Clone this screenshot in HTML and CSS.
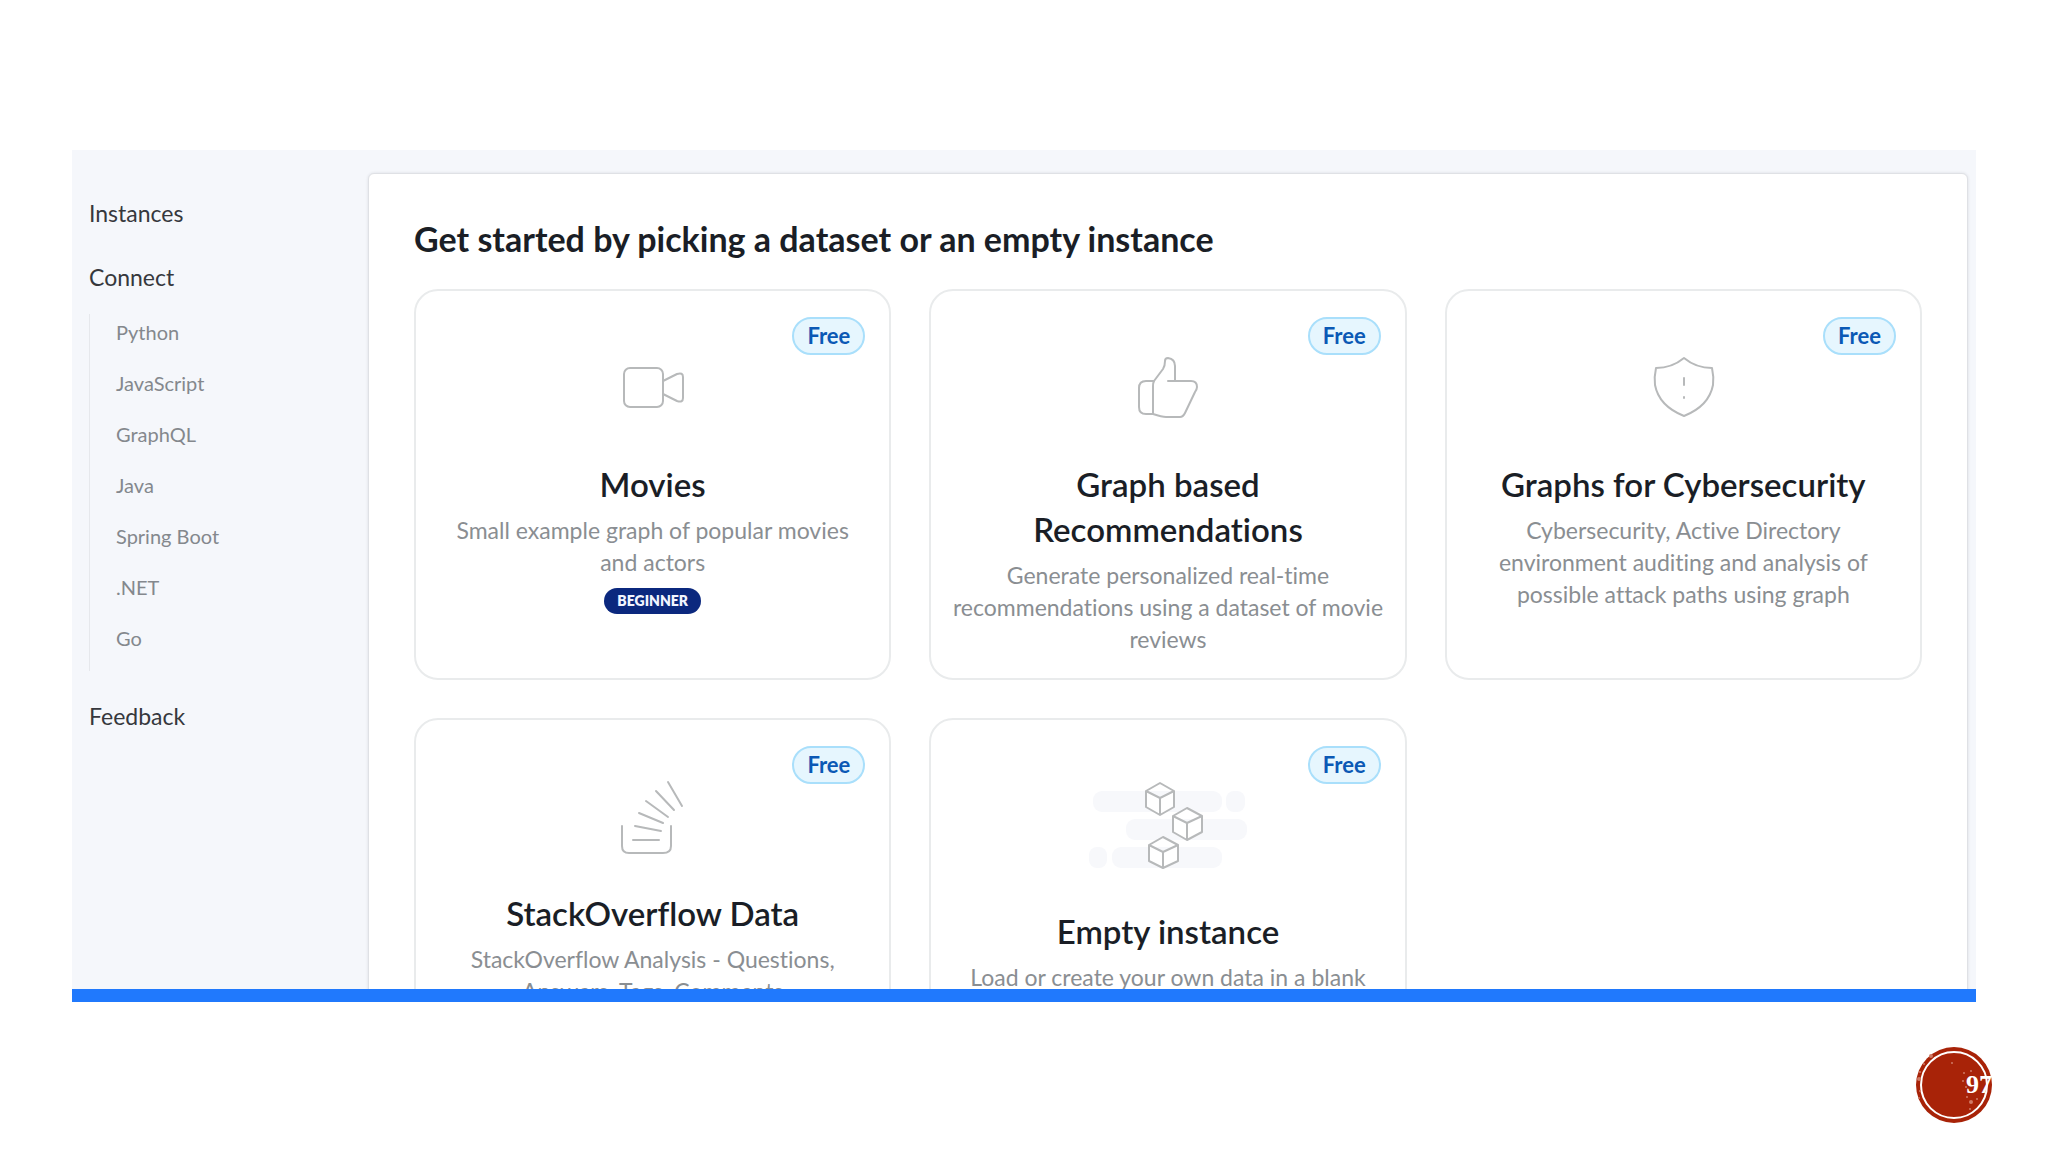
FILE: index.html
```html
<!doctype html>
<html lang="en">
  <head>
    <meta charset="UTF-8" />
    <meta name="viewport" content="width=device-width, initial-scale=1.0" />
    <title>Pick a dataset</title>
    <link rel="stylesheet" href="styles.css">
  </head>
  <body>
    <div class="app">
      <nav class="sidebar">
        <a class="nav-link" href="#">Instances</a>
        <a class="nav-link" href="#">Connect</a>
        <div class="subnav">
          <a href="#">Python</a>
          <a href="#">JavaScript</a>
          <a href="#">GraphQL</a>
          <a href="#">Java</a>
          <a href="#">Spring Boot</a>
          <a href="#">.NET</a>
          <a href="#">Go</a>
        </div>
        <a class="nav-link" href="#">Feedback</a>
      </nav>

      <main class="panel">
        <h1>Get started by picking a dataset or an empty instance</h1>

        <div class="cards">
          <a class="card" href="#">
            <span class="free">Free</span>
            <div class="card-icon">
              <svg width="80" height="80" viewBox="0 0 80 80">
                <rect x="11" y="21" width="39" height="39" rx="6" />
                <path d="M50 34 L64 27 Q70 25 70 30 V51 Q70 56 64 54 L50 47" />
              </svg>
            </div>
            <h2>Movies</h2>
            <p>Small example graph of popular movies and actors</p>
            <span class="level">BEGINNER</span>
          </a>

          <a class="card" href="#">
            <span class="free">Free</span>
            <div class="card-icon">
              <svg width="80" height="80" viewBox="0 0 80 80">
                <path d="M40 34 H63 Q69 34 69 40 Q69 42 67 45 L57 66 Q55 70 52 70 H38 Q34 70 25 67 H18 Q11 67 11 60 V41 Q11 34 18 34 H26 L35 22 Q37 19 37 14 Q37 11 40 11 Q47 12 47 19 V34" />
                <path d="M26 34 Q25 36 25 39 V67" />
              </svg>
            </div>
            <h2>Graph based Recommendations</h2>
            <p>Generate personalized real-time recommendations using a dataset of movie reviews</p>
          </a>

          <a class="card" href="#">
            <span class="free">Free</span>
            <div class="card-icon">
              <svg width="80" height="80" viewBox="0 0 80 80">
                <path d="M41 11 Q53 21 69 21 Q71 30 70 38 Q66 59 41 69 Q16 59 12 38 Q11 30 13 21 Q29 21 41 11 Z" />
                <path d="M41 31 V38 M41 50 V51" />
              </svg>
            </div>
            <h2>Graphs for Cybersecurity</h2>
            <p>Cybersecurity, Active Directory environment auditing and analysis of possible attack paths using graph</p>
          </a>

          <a class="card" href="#">
            <span class="free">Free</span>
            <div class="card-icon">
              <svg width="80" height="80" viewBox="0 0 80 80">
                <path d="M9 50 V70 Q9 77 16 77 H50 Q58 77 58 70 V50" />
                <path d="M20 64 H46 M22 50 L48 55 M26 37 L50 47 M33 25 L55 41 M43 15 L61 34 M55 6 L69 30" />
              </svg>
            </div>
            <h2>StackOverflow Data</h2>
            <p>StackOverflow Analysis - Questions, Answers, Tags, Comments</p>
          </a>

          <a class="card" href="#">
            <span class="free">Free</span>
            <div class="card-icon">
              <svg class="cubes" width="160" height="98" viewBox="0 0 160 98">
                <g class="shade">
                  <rect x="5" y="15" width="129" height="21" rx="9" />
                  <rect x="138" y="15" width="19" height="21" rx="8" />
                  <rect x="38" y="43" width="121" height="21" rx="9" />
                  <rect x="1" y="71" width="18" height="21" rx="8" />
                  <rect x="24" y="71" width="110" height="21" rx="9" />
                </g>
                <path d="M72 7 L86 15 V31 L72 39 L58 31 V15 Z M58 15 L72 22 L86 15 M72 22 V39" />
                <path d="M99 32 L114 40 V56 L99 64 L85 56 V40 Z M85 40 L99 47 L114 40 M99 47 V64" />
                <path d="M75 61 L90 69 V85 L75 92 L61 85 V69 Z M61 69 L75 76 L90 69 M75 76 V92" />
              </svg>
            </div>
            <h2>Empty instance</h2>
            <p>Load or create your own data in a blank instance</p>
          </a>
        </div>
      </main>
    </div>

    <footer class="footer">
      <div class="page-number">
        <svg width="77" height="77" viewBox="0 0 77 77">
          <circle class="disc" cx="38" cy="38" r="38" />
          <circle class="ring" cx="38" cy="38" r="33" />
          <g class="specks">
            <circle cx="4" cy="25" r="1" />
            <circle cx="3" cy="32" r="2" />
            <circle cx="4" cy="44" r="1" />
            <circle cx="3" cy="51" r="1" />
            <circle cx="8" cy="17" r="1" />
            <circle cx="15" cy="9" r="2" />
            <circle cx="48" cy="26" r="1" />
            <circle cx="55" cy="24" r="1" />
            <circle cx="50" cy="40" r="1" />
            <circle cx="51" cy="50" r="1" />
            <circle cx="55" cy="55" r="2" />
            <circle cx="61" cy="52" r="1" />
            <circle cx="54" cy="62" r="1" />
            <circle cx="36" cy="16" r="1" />
            <circle cx="47" cy="34" r="1" />
          </g>
        </svg>
        <span>97</span>
      </div>
    </footer>
  </body>
</html>
```

FILE: styles.css
```css
* {
  box-sizing: border-box;
}

body {
  display: flex;
  flex-direction: column;
  margin: 0;
  background: white;
  padding-top: 150px;
  height: 100vh;
  font-family: Lato, 'Open Sans', sans-serif;
  font-variant-ligatures: none;
}

a {
  color: inherit;
  text-decoration: none;
}

.app {
  display: flex;
  flex: 1;
  margin: 0 72px;
  border-bottom: 13px solid #2079fd;
  background: #f5f7fb;
  padding: 23px 8px 0 17px;
  min-height: 0;
  overflow: hidden;
}

.sidebar {
  display: flex;
  flex-direction: column;
  flex: 0 0 279px;
  padding-top: 8px;
  color: #36383d;
}

.nav-link {
  font-size: 23px;
  line-height: 64px;
}

.subnav {
  display: flex;
  flex-direction: column;
  margin: 5px 0 13px;
  border-left: 1px solid #e6e8ec;
  padding-left: 26px;
  color: #84888d;
}

.subnav a {
  padding-bottom: 15px;
  font-size: 20px;
  line-height: 36px;
}

.panel {
  flex: 1;
  height: max-content;
  border: 1px solid #dfe1e5;
  border-radius: 6px;
  box-shadow: 0 0 3px rgba(30, 40, 60, 0.12);
  background: white;
  padding: 43px 45px;
}

h1 {
  margin: 0 0 28px;
  color: #1a1e26;
  font-weight: 700;
  font-size: 34px;
  line-height: 44px;
}

.cards {
  display: grid;
  grid-template-columns: repeat(3, 1fr);
  grid-auto-rows: 1fr;
  gap: 38px;
}

.card {
  position: relative;
  border: 2px solid #e9ebec;
  border-radius: 24px;
  padding: 22px 20px 23px;
  color: #8a8e92;
  text-align: center;
}

.card h2 {
  margin: 0 0 7px;
  color: #1a1e26;
  font-weight: 600;
  font-size: 33px;
  line-height: 45px;
}

.card p {
  margin: 0;
  font-size: 23px;
  line-height: 32px;
}

.card-icon {
  display: flex;
  justify-content: center;
  padding: 34px 0 35px;
}

.card-icon svg {
  fill: none;
  stroke: #b7b9ba;
  stroke-width: 2;
  stroke-linecap: round;
  stroke-linejoin: round;
}

.card-icon .cubes path {
  fill: white;
}

.card-icon .shade {
  fill: #f7f8fb;
  stroke: none;
}

.free {
  position: absolute;
  top: 26px;
  right: 24px;
  border: 2px solid #a9dffb;
  border-radius: 20px;
  background: #e6f6fe;
  padding: 0 13px;
  color: #0b59b5;
  font-weight: 700;
  font-size: 22px;
  line-height: 34px;
}

.level {
  display: inline-block;
  margin-top: 10px;
  border-radius: 13px;
  background: #0b287e;
  padding: 0 13px;
  color: #f2f5ff;
  font-weight: 800;
  font-size: 14px;
  line-height: 26px;
}

.footer {
  display: flex;
  justify-content: flex-end;
  padding: 45px 55px 28px;
}

.page-number {
  position: relative;
  width: 77px;
  height: 77px;
}

.page-number span {
  position: absolute;
  right: 1px;
  top: 23px;
  color: white;
  font-weight: 700;
  font-size: 26px;
  font-family: 'Liberation Serif', serif;
  line-height: 30px;
}

.disc {
  fill: #a82308;
}

.ring {
  fill: none;
  stroke: white;
  stroke-width: 2;
}

.specks {
  fill: #cf7a66;
}
```
